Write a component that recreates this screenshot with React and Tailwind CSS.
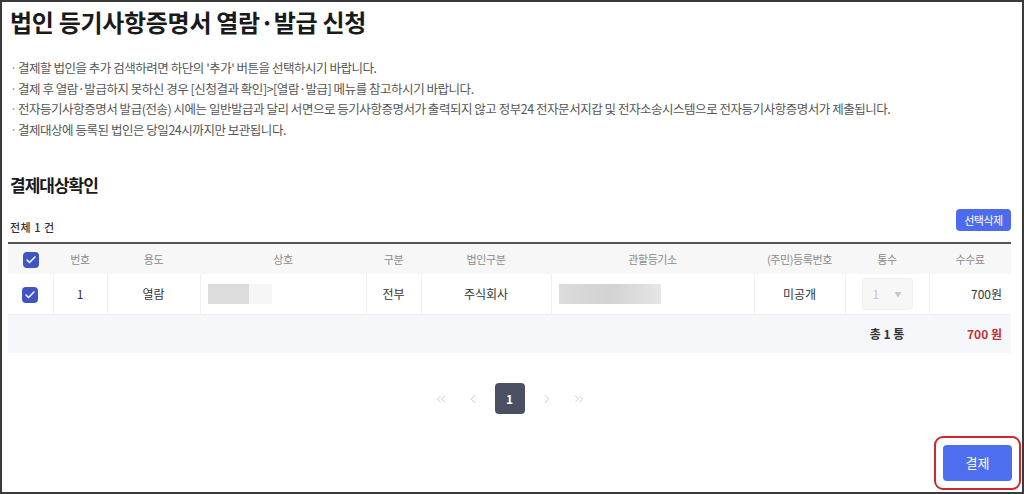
import React from "react";
import { ChevronLeft, ChevronRight, ChevronsLeft, ChevronsRight, Check } from "lucide-react";

const FONT = "font-['Noto_Sans_CJK_KR','Noto_Sans',sans-serif]";

const notices = [
  "결제할 법인을 추가 검색하려면 하단의 '추가' 버튼을 선택하시기 바랍니다.",
  "결제 후 열람·발급하지 못하신 경우 [신청결과 확인]>[열람·발급] 메뉴를 참고하시기 바랍니다.",
  "전자등기사항증명서 발급(전송) 시에는 일반발급과 달리 서면으로 등기사항증명서가 출력되지 않고 정부24 전자문서지갑 및 전자소송시스템으로 전자등기사항증명서가 제출됩니다.",
  "결제대상에 등록된 법인은 당일24시까지만 보관됩니다.",
];

// column widths measured from the reference
const cols = [45, 54, 93, 166, 55, 130, 203, 91, 84, 82];
const heads = ["", "번호", "용도", "상호", "구분", "법인구분", "관할등기소", "(주민)등록번호", "통수", "수수료"];

const Checkbox = () => (
  <span className="inline-flex w-4 h-4 items-center justify-center rounded-[4px] bg-[#4054c4]">
    <Check className="w-3 h-3 text-white" strokeWidth={3} />
  </span>
);

const App = () => {
  return (
    <div className={`w-[1024px] h-[494px] border-2 border-[#3a3a3a] bg-white pl-[6px] pr-[11px] overflow-hidden ${FONT}`}>
      {/* Title */}
      <h1 className="mt-[4px] ml-[2px] text-[24px] leading-[31px] font-bold text-[#1a1a1a] tracking-[-0.3px]">
        법인 등기사항증명서 열람·발급 신청
      </h1>

      {/* Notices */}
      <ul className="mt-[21px] ml-[2px]">
        {notices.map((t) => (
          <li key={t} className="flex text-[12.5px] leading-[20.5px] text-[#555] tracking-[-0.47px]">
            <span className="w-[8px] text-[#999]">·</span>
            <span>{t}</span>
          </li>
        ))}
      </ul>

      {/* Section */}
      <h2 className="mt-[33px] ml-[2px] text-[17px] leading-[24px] font-bold text-[#1a1a1a] tracking-[-1px]">
        결제대상확인
      </h2>

      <div className="mt-[12px] flex justify-between h-[26px]">
        <span className="self-end ml-[2px] text-[11px] leading-[16px] font-medium text-[#333] tracking-[0.5px]">전체 1 건</span>
        <button className="self-start w-[55px] h-[22px] rounded-[4px] bg-[#4d6bec] text-white text-[11px] tracking-[-0.5px]">
          선택삭제
        </button>
      </div>

      {/* Table */}
      <table className="mt-[7px] w-[1003px] table-fixed border-collapse border-t-2 border-[#555]">
        <colgroup>
          {cols.map((w, i) => (
            <col key={i} style={{ width: w }} />
          ))}
        </colgroup>
        <thead>
          <tr className="h-[31px] bg-[#f7f7f7]">
            {heads.map((h, i) => (
              <th key={i} className="p-0 text-[11px] font-normal text-[#8a8a8a] text-center tracking-[-0.4px]">
                {i === 0 ? <span className="inline-flex align-middle"><Checkbox /></span> : h}
              </th>
            ))}
          </tr>
        </thead>
        <tbody>
          <tr className="h-[40px] text-[12px] text-[#333] text-center">
            <td className="p-0"><span className="inline-flex align-middle"><Checkbox /></span></td>
            <td className="p-0 border-l border-[#f0f0f0]">1</td>
            <td className="p-0 border-l border-[#f0f0f0]">열람</td>
            <td className="p-0 border-l border-[#f0f0f0]">
              <div className="ml-[7px] flex h-[20px] w-[64px]">
                <div className="w-[41px] bg-[#dcdcdc]" />
                <div className="flex-1 bg-[#f6f6f6]" />
              </div>
            </td>
            <td className="p-0 border-l border-[#f0f0f0]">전부</td>
            <td className="p-0 border-l border-[#f0f0f0]">주식회사</td>
            <td className="p-0 border-l border-[#f0f0f0]">
              <div className="ml-[7px] h-[20px] w-[102px] bg-linear-to-r from-[#dcdcdc] via-[#d2d2d2] to-[#e6e6e6]" />
            </td>
            <td className="p-0 border-l border-[#f0f0f0]">미공개</td>
            <td className="p-0 border-l border-[#f0f0f0]">
              <div className="mx-auto flex h-[32px] w-[51px] items-center justify-between rounded-[4px] border border-[#f0f0f0] bg-[#f7f7f7] px-[10px]">
                <span className="text-[12px] text-[#c8c8c8]">1</span>
                <span className="text-[7px] text-[#c8c8c8]">▼</span>
              </div>
            </td>
            <td className="p-0 pr-[9px] border-l border-[#f0f0f0] text-right">700원</td>
          </tr>
          <tr className="h-[39px] bg-[#f5f7fa] border-t border-[#eef0f3] text-[12px] font-bold">
            <td colSpan={8} className="p-0" />
            <td className="p-0 text-center text-[#333]">총 1 통</td>
            <td className="p-0 pr-[9px] text-right text-[#c4303a]">700 원</td>
          </tr>
        </tbody>
      </table>

      {/* Pagination */}
      <div className="mt-[30px] flex items-center justify-center w-[1003px] text-[#c0c0c0]">
        <span className="w-[32px] flex justify-center"><ChevronsLeft className="w-[14px] h-[14px]" strokeWidth={1.5} /></span>
        <span className="w-[32px] flex justify-center"><ChevronLeft className="w-[14px] h-[14px]" strokeWidth={1.5} /></span>
        <span className="mx-[6px] w-[30px] h-[31px] flex items-center justify-center rounded-[4px] bg-[#4a4f63] text-white text-[12px] font-bold">
          1
        </span>
        <span className="w-[32px] flex justify-center"><ChevronRight className="w-[14px] h-[14px]" strokeWidth={1.5} /></span>
        <span className="w-[32px] flex justify-center"><ChevronsRight className="w-[14px] h-[14px]" strokeWidth={1.5} /></span>
      </div>

      {/* Pay button with red highlight */}
      <div className="mt-[22px] flex justify-end w-[1003px]">
        <div className="-mr-[10px] rounded-[9px] border-2 border-[#d0262e] p-[7px]">
          <button className="block w-[69px] h-[36px] rounded-[4px] bg-[#4e6ef0] text-white text-[13px]">
            결제
          </button>
        </div>
      </div>
    </div>
  );
};

export default App;
